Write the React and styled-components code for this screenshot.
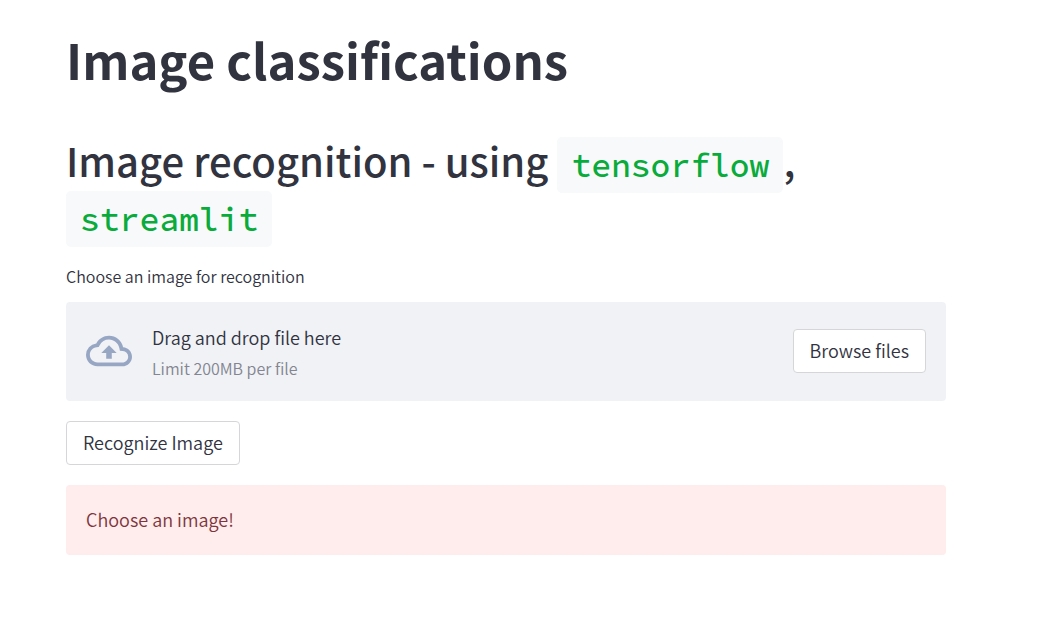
import React, { useRef } from "react";
import styled, { createGlobalStyle } from "styled-components";

const GlobalStyle = createGlobalStyle`
  *, *::before, *::after { box-sizing: border-box; }
  body {
    margin: 0;
    background: #ffffff;
    color: #31333f;
    font-family: "Source Sans Pro", "Noto Sans CJK JP", "Open Sans", sans-serif;
    font-size: 18px;
    font-weight: 350;
    line-height: 30px;
  }
`;

const Page = styled.main`
  display: flex;
  flex-direction: column;
  align-items: flex-start;
  padding: 26px 96px 40px 66px;
`;

const Title = styled.h1`
  margin: 0;
  font-size: 49px;
  font-weight: 700;
  line-height: 66px;
`;

const Heading = styled.h2`
  margin: 41px 0 0;
  font-size: 40px;
  font-weight: 500;
  line-height: 54px;
`;

const Code = styled.code`
  padding: 8px 14px 7px;
  border-radius: 5px;
  background: #f8f9fb;
  color: #09ab3b;
  font-family: "Source Code Pro", "Noto Sans Mono CJK JP", "DejaVu Sans Mono", monospace;
  font-size: 33px;
  line-height: 40px;
`;

const Label = styled.label`
  margin: 23px 0 14px;
  font-size: 16px;
  line-height: 24px;
`;

const Dropzone = styled.section`
  display: flex;
  align-items: center;
  align-self: stretch;
  gap: 20px;
  padding: 19px 20px 20px;
  border-radius: 4px;
  background: #f0f2f6;
`;

const CloudIcon = styled.svg`
  width: 46px;
  height: 46px;
  flex: none;
  fill: #97a6c3;
`;

const Instructions = styled.div`
  display: flex;
  flex: 1;
  flex-direction: column;
  gap: 3px;
  padding-top: 1px;
`;

const Hint = styled.small`
  color: #838590;
  font-size: 16px;
  line-height: 26px;
`;

const Button = styled.button`
  padding: 5px 16px 7px;
  border: 1px solid #d6d6d9;
  border-radius: 4px;
  background: #ffffff;
  color: inherit;
  font: inherit;
  cursor: pointer;
`;

const FileInput = styled.input`
  display: none;
`;

const Actions = styled.div`
  display: flex;
  margin: 20px 0;
`;

const Alert = styled.div`
  align-self: stretch;
  padding: 19px 20px 21px;
  border-radius: 4px;
  background: #ffecec;
  color: #7d353b;
`;

export default function App() {
  const fileInput = useRef(null);

  return (
    <>
      <GlobalStyle />
      <Page>
        <Title>Image classifications</Title>
        <Heading>
          Image recognition - using <Code>tensorflow</Code>, <Code>streamlit</Code>
        </Heading>
        <Label htmlFor="image-file">Choose an image for recognition</Label>
        <Dropzone>
          <CloudIcon viewBox="0 0 24 24" aria-hidden="true">
            <path d="M19.35 10.04A7.49 7.49 0 0012 4C9.11 4 6.6 5.64 5.35 8.04A5.994 5.994 0 000 14c0 3.31 2.69 6 6 6h13c2.76 0 5-2.24 5-5 0-2.64-2.05-4.78-4.65-4.96zM19 18H6c-2.21 0-4-1.79-4-4 0-2.05 1.53-3.76 3.56-3.97l1.07-.11.5-.95A5.469 5.469 0 0112 6c2.62 0 4.88 1.86 5.39 4.43l.3 1.5 1.53.11A2.98 2.98 0 0122 15c0 1.65-1.35 3-3 3zM8 13h2.55v3h2.9v-3H16l-4-4z" />
          </CloudIcon>
          <Instructions>
            <span>Drag and drop file here</span>
            <Hint>Limit 200MB per file</Hint>
          </Instructions>
          <FileInput ref={fileInput} id="image-file" type="file" />
          <Button type="button" onClick={() => fileInput.current.click()}>
            Browse files
          </Button>
        </Dropzone>
        <Actions>
          <Button type="button">Recognize Image</Button>
        </Actions>
        <Alert role="alert">Choose an image!</Alert>
      </Page>
    </>
  );
}
